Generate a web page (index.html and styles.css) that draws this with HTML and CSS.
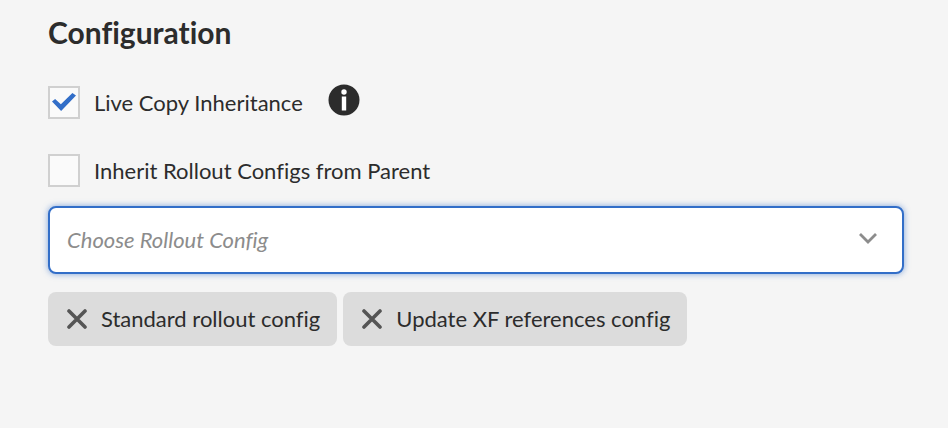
FILE: index.html
```html
<!DOCTYPE html>
<html lang="en">
<head>
  <meta charset="UTF-8" />
  <meta name="viewport" content="width=device-width, initial-scale=1.0"/>
  <title>Configuration</title>
  <link rel="stylesheet" href="styles.css">
</head>
<body>
  <main class="config">
    <h1>Configuration</h1>

    <div class="option">
      <input type="checkbox" id="liveCopy" checked>
      <label for="liveCopy">Live Copy Inheritance</label>
      <button class="info" type="button" aria-label="More information">
        <svg viewBox="0 0 32 32" width="32" height="32">
          <circle cx="16" cy="16" r="15.5" fill="#2c2c2c"/>
          <circle cx="16" cy="8" r="2.7" fill="#fff"/>
          <rect x="13.8" y="12.5" width="4.4" height="14" fill="#fff"/>
        </svg>
      </button>
    </div>

    <div class="option">
      <input type="checkbox" id="inheritRollout">
      <label for="inheritRollout">Inherit Rollout Configs from Parent</label>
    </div>

    <div class="select-box">
      <select id="rolloutConfig" aria-label="Choose Rollout Config">
        <option value="">Choose Rollout Config</option>
        <option>Standard rollout config</option>
        <option>Update XF references config</option>
      </select>
      <svg class="chevron" viewBox="0 0 20 12" width="20" height="12">
        <path d="M2 2l8 8 8-8" fill="none" stroke="#8c8c8c" stroke-width="2.8"/>
      </svg>
    </div>

    <div class="tags">
      <div class="tag">
        <button type="button" aria-label="Remove Standard rollout config">
          <svg viewBox="0 0 20 20" width="20" height="20">
            <path d="M2 2l16 16M18 2L2 18" stroke="#555" stroke-width="3.6" stroke-linecap="round"/>
          </svg>
        </button>
        <span>Standard rollout config</span>
      </div>
      <div class="tag">
        <button type="button" aria-label="Remove Update XF references config">
          <svg viewBox="0 0 20 20" width="20" height="20">
            <path d="M2 2l16 16M18 2L2 18" stroke="#555" stroke-width="3.6" stroke-linecap="round"/>
          </svg>
        </button>
        <span>Update XF references config</span>
      </div>
    </div>
  </main>
</body>
</html>
```
FILE: styles.css
```css
* {
  box-sizing: border-box;
}

body {
  margin: 0;
  background-color: #f5f5f5;
  color: #2c2c2c;
  font-family: Lato, "Noto Sans", sans-serif;
  font-size: 22px;
  line-height: 32px;
  font-variant-ligatures: none;
}

.config {
  padding: 14px 44px 48px 48px;
}

h1 {
  margin: 0 0 35px;
  font-size: 30px;
  line-height: 36px;
  font-weight: bold;
}

.option {
  display: flex;
  align-items: center;
  height: 34px;
  margin-bottom: 34px;
}

.option + .option {
  margin-bottom: 19px;
}

input[type="checkbox"] {
  appearance: none;
  flex: none;
  display: grid;
  place-items: center;
  width: 32px;
  height: 33px;
  margin: 0 14px 0 0;
  border: 2px solid #d0d0d0;
  background-color: #fafafa;
}

/* Tick mark */
input[type="checkbox"]:checked::before {
  content: "";
  width: 24px;
  height: 18px;
  background-color: #326ec8;
  clip-path: polygon(0 47%, 13% 33%, 37% 62%, 85% 0, 100% 14%, 38% 100%);
}

label {
  padding-top: 2px;
}

button {
  display: flex;
  padding: 0;
  border: none;
  background: none;
  cursor: pointer;
}

.info {
  margin: 0 0 4px 25px;
}

.select-box {
  position: relative;
}

select {
  appearance: none;
  display: block;
  width: 100%;
  height: 68px;
  padding: 0 48px 0 17px;
  border: 2px solid #326ec8;
  border-radius: 8px;
  background-color: #fff;
  box-shadow: 0 0 6px rgba(50, 110, 200, 0.6);
  color: #8c8c8c;
  font: inherit;
  font-style: italic;
  outline: none;
}

.chevron {
  position: absolute;
  top: 26px;
  right: 26px;
  pointer-events: none;
}

.tags {
  display: flex;
  flex-wrap: wrap;
  gap: 6px;
  margin-top: 18px;
}

.tag {
  display: flex;
  align-items: center;
  gap: 14px;
  height: 54px;
  padding: 0 17px 0 19px;
  border-radius: 8px;
  background-color: #dcdcdc;
}
```
